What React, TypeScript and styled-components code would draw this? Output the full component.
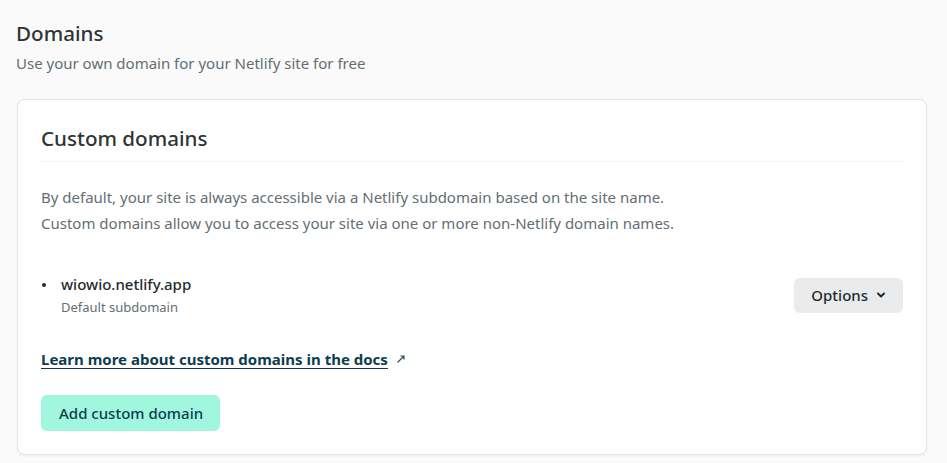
import React from 'react'
import styled, { createGlobalStyle } from 'styled-components'

const GlobalStyle = createGlobalStyle`
    body {
        margin: 0;
        background: #fafafa;
        font-family: 'Noto Sans', 'Open Sans', sans-serif;
        color: #2d3b41;
    }
`

const App = () => {
    return (
        <Page>
            <GlobalStyle />
            <Title>Domains</Title>
            <Subtitle>Use your own domain for your Netlify site for free</Subtitle>
            <Card>
                <CardTitle>Custom domains</CardTitle>
                <Description>
                    By default, your site is always accessible via a Netlify subdomain based on the site name.
                    <br />
                    Custom domains allow you to access your site via one or more non-Netlify domain names.
                </Description>
                <DomainRow>
                    <DomainInfo>
                        <DomainName>wiowio.netlify.app</DomainName>
                        <DomainNote>Default subdomain</DomainNote>
                    </DomainInfo>
                    <OptionsButton>
                        Options
                        <svg width="10" height="10" viewBox="0 0 10 10">
                            <path d="M2 3.5 L5 6.5 L8 3.5" fill="none" stroke="#1e2b30" strokeWidth="2" strokeLinecap="round" strokeLinejoin="round" />
                        </svg>
                    </OptionsButton>
                </DomainRow>
                <DocsLine>
                    <DocsLink href="#">Learn more about custom domains in the docs</DocsLink>
                    <svg width="10" height="10" viewBox="0 0 10 10">
                        <path d="M1.5 8.5 L8 2 M4.5 2 H8 V5.5" fill="none" stroke="#2d4a5a" strokeWidth="1.2" />
                    </svg>
                </DocsLine>
                <AddButton>Add custom domain</AddButton>
            </Card>
        </Page>
    )
}

export default App

const Page = styled.div`
    padding: 19px 20px 8px 16px;
`

const Title = styled.h2`
    margin: 0;
    font-size: 20.6px;
    font-weight: 500;
    line-height: 28px;
    color: #2d3436;
`

const Subtitle = styled.p`
    margin: 6px 0 0;
    font-size: 15px;
    line-height: 20px;
    color: #646e73;
`

const Card = styled.section`
    margin-top: 26px;
    margin-left: 1px;
    background: #fff;
    border: 1px solid #e4e6e7;
    border-radius: 8px;
    box-shadow: 0 1px 3px rgba(0, 0, 0, 0.06);
    padding: 24px 23px 23px 23px;
`

const CardTitle = styled.h3`
    margin: 0;
    padding-bottom: 9px;
    font-size: 20.6px;
    font-weight: 500;
    line-height: 28px;
    color: #2d3436;
    border-bottom: 1px solid #f3f4f4;
`

const Description = styled.p`
    margin: 22px 0 0;
    font-size: 15px;
    line-height: 26px;
    color: #646e73;
`

const DomainRow = styled.div`
    margin-top: 37px;
    display: flex;
    justify-content: space-between;
    align-items: center;
`

const DomainInfo = styled.div`
    position: relative;
    padding-left: 20px;
    &::before {
        content: '';
        position: absolute;
        left: 1px;
        top: 10px;
        width: 4px;
        height: 4px;
        border-radius: 50%;
        background: #1e2b30;
    }
`

const DomainName = styled.div`
    font-size: 15px;
    font-weight: 500;
    line-height: 22px;
    color: #1e2b30;
`

const DomainNote = styled.div`
    margin-top: 2px;
    font-size: 13px;
    line-height: 20px;
    color: #646e73;
`

const OptionsButton = styled.button`
    display: flex;
    align-items: center;
    gap: 8px;
    height: 35px;
    padding: 0 17px 0 17px;
    border: none;
    border-radius: 6px;
    background: #e9ebed;
    font-family: inherit;
    font-size: 15px;
    font-weight: 500;
    color: #1e2b30;
`

const DocsLine = styled.div`
    margin-top: 31px;
    display: flex;
    align-items: center;
    gap: 8px;
`

const DocsLink = styled.a`
    font-size: 15px;
    font-weight: 700;
    line-height: 22px;
    color: #0d3d4f;
    text-decoration: underline;
    text-underline-offset: 3px;
`

const AddButton = styled.button`
    margin-top: 25px;
    height: 36px;
    padding: 0 17px 0 18px;
    border: none;
    border-radius: 6px;
    background: #a0f7de;
    font-family: inherit;
    font-size: 15px;
    font-weight: 500;
    color: #0d3d4f;
`
